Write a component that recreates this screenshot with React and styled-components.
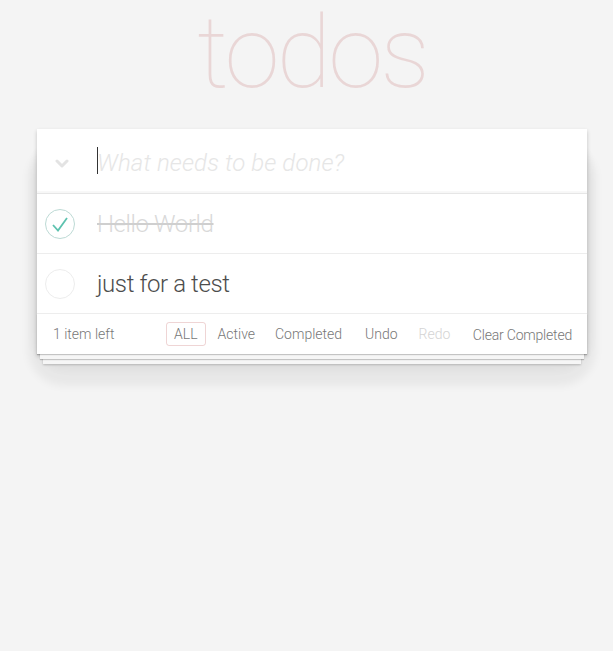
import React from "react";
import styled, { createGlobalStyle } from "styled-components";

const GlobalStyle = createGlobalStyle`
  html, body {
    margin: 0;
    padding: 0;
    min-height: 100%;
  }
  body {
    background: #f4f4f4;
    font-family: Roboto, "Helvetica Neue", "Liberation Sans", sans-serif;
    font-weight: 300;
    color: #4d4d4d;
    -webkit-font-smoothing: antialiased;
  }
`;

const Page = styled.div`
  width: 550px;
  min-height: 640px;
  margin-left: 37px;
`;

const Title = styled.h1`
  margin: 0 0 24px;
  font-size: 100px;
  line-height: 105px;
  font-weight: 100;
  text-align: center;
  color: rgba(175, 47, 47, 0.15);
  letter-spacing: -3px;
`;

// soft rounded glow behind the card
const Shell = styled.div`
  border-radius: 28px;
  box-shadow: 0 23px 9px 9px rgba(0, 0, 0, 0.05),
    0 12px 8px 3px rgba(0, 0, 0, 0.045);
`;

const Card = styled.section`
  position: relative;
  isolation: isolate;
  background: #fff;
  box-shadow: 0 2px 4px rgba(0, 0, 0, 0.2);
`;

const Header = styled.header`
  display: flex;
  align-items: center;
  height: 65px;
  box-shadow: inset 0 -2px 1px rgba(0, 0, 0, 0.03);
  border-bottom: 1px solid #e6e6e6;
  box-sizing: border-box;
`;

const ToggleAll = styled.div`
  width: 50px;
  display: flex;
  justify-content: center;
  padding-top: 5px;
`;

const NewTodo = styled.div`
  position: relative;
  margin-left: 10px;
  padding-top: 3px;
  font-size: 24px;
  font-style: italic;
  color: #e6e6e6;
  line-height: 28px;
  letter-spacing: 0.1px;

  &::before {
    content: "";
    position: absolute;
    left: 0;
    top: 1px;
    width: 1px;
    height: 27px;
    background: #333;
  }
`;

const TodoList = styled.ul`
  margin: 0;
  padding: 0;
  list-style: none;
`;

const Item = styled.li`
  display: flex;
  align-items: center;
  height: 59px;
  border-bottom: 1px solid #ededed;
`;

const Check = styled.span`
  width: 30px;
  height: 30px;
  margin: 0 22px 0 8px;
  box-sizing: border-box;
  border-radius: 50%;
  border: 1px solid ${(p) => (p.$done ? "#bddad5" : "#ededed")};
  display: flex;
  align-items: center;
  justify-content: center;
`;

const Label = styled.label`
  font-size: 24px;
  line-height: 29px;
  letter-spacing: -0.4px;
  color: ${(p) => (p.$done ? "#d9d9d9" : "#4d4d4d")};
  text-decoration: ${(p) => (p.$done ? "line-through" : "none")};
  text-decoration-color: #cfcfcf;
  padding-top: 2px;
`;

const Footer = styled.footer`
  position: relative;
  display: flex;
  align-items: center;
  height: 40px;
  padding: 0 15px 0 16px;
  font-size: 14px;
  color: #777;

  &::before {
    content: "";
    position: absolute;
    left: 0;
    right: 0;
    bottom: 0;
    height: 40px;
    z-index: -1;
    box-shadow: 0 1px 1px rgba(0, 0, 0, 0.2), 0 8px 0 -3px #f6f6f6,
      0 9px 1px -3px rgba(0, 0, 0, 0.2), 0 16px 0 -6px #f6f6f6,
      0 17px 2px -6px rgba(0, 0, 0, 0.2);
  }
`;

const Count = styled.span`
  width: 113px;
`;

const Filters = styled.ul`
  display: flex;
  gap: 4px;
  margin: 0;
  padding: 0;
  list-style: none;
`;

const FilterLink = styled.li`
  padding: 3px 7px;
  line-height: 16px;
  border-radius: 3px;
  border: 1px solid ${(p) => (p.$selected ? "rgba(175, 47, 47, 0.2)" : "transparent")};
  color: ${(p) => (p.$disabled ? "#d4d4d4" : "#777")};
  margin-left: ${(p) => p.$shift || 0}px;
`;

const Clear = styled.span`
  margin-left: auto;
  padding-top: 1px;
  letter-spacing: -0.2px;
`;

const Chevron = () => (
  <svg width="14" height="10" viewBox="0 0 14 10">
    <polyline points="2,2 7,7 12,2" fill="none" stroke="#e3e3e3" strokeWidth="3" strokeLinecap="round" strokeLinejoin="round" />
  </svg>
);

const Tick = () => (
  <svg width="20" height="18" viewBox="0 0 20 18">
    <polyline points="3,10 8,15.5 17,3" fill="none" stroke="#5dc2af" strokeWidth="1.8" />
  </svg>
);

const todos = [
  { title: "Hello World", done: true },
  { title: "just for a test", done: false },
];

export default function App() {
  return (
    <>
      <GlobalStyle />
      <Page>
        <Title>todos</Title>
        <Shell>
          <Card>
            <Header>
              <ToggleAll>
                <Chevron />
              </ToggleAll>
              <NewTodo>What needs to be done?</NewTodo>
            </Header>
            <TodoList>
              {todos.map((t, i) => (
                <Item key={i}>
                  <Check $done={t.done}>{t.done && <Tick />}</Check>
                  <Label $done={t.done}>{t.title}</Label>
                </Item>
              ))}
            </TodoList>
            <Footer>
              <Count>1 item left</Count>
              <Filters>
                <FilterLink $selected>ALL</FilterLink>
                <FilterLink>Active</FilterLink>
                <FilterLink>Completed</FilterLink>
                <FilterLink $shift={3}>Undo</FilterLink>
                <FilterLink $shift={1} $disabled>Redo</FilterLink>
              </Filters>
              <Clear>Clear Completed</Clear>
            </Footer>
          </Card>
        </Shell>
      </Page>
    </>
  );
}
